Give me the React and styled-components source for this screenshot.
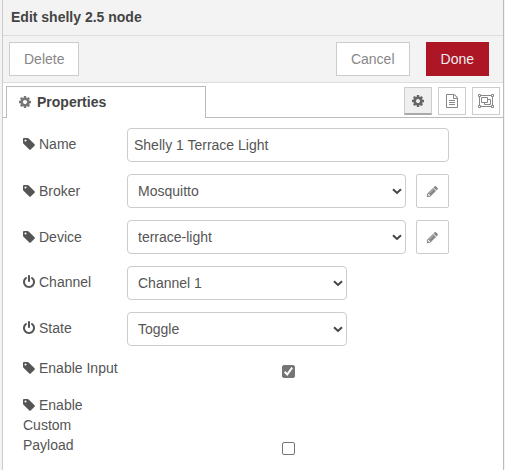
import React from "react";
import styled, { createGlobalStyle, css } from "styled-components";

const GlobalStyle = createGlobalStyle`
  *, *::before, *::after { box-sizing: border-box; }
  body {
    margin: 0;
    background: #f3f3f3;
    color: #555;
    font: 14px/20px "Helvetica Neue", "Liberation Sans", Arial, sans-serif;
  }
  button, input, select { font: inherit; margin: 0; }
`;

const Tray = styled.main`
  min-height: 100vh;
  margin: 0 1px 0 2px;
  border: 1px solid #bbb;
  border-left-color: #ccc;
  border-width: 0 1px;
  background: #fff;
`;

const Header = styled.h1`
  margin: 0;
  padding: 7px 8px 8px;
  border-bottom: 1px solid #ddd;
  background: #f3f3f3;
  color: #444;
  font-size: 14px;
  font-weight: bold;
  line-height: 20px;
`;

const Toolbar = styled.div`
  display: flex;
  align-items: center;
  gap: 16px;
  padding: 6px 14px 6px 6px;
  border-bottom: 1px solid #ddd;
  background: #f3f3f3;
`;

const Button = styled.button`
  height: 34px;
  padding: 0 14px;
  border: 1px solid #ccc;
  border-radius: 0;
  background: #fff;
  color: #888;
  cursor: pointer;
  ${(p) => p.$pushRight && css`margin-left: auto;`}
  ${(p) =>
    p.$primary &&
    css`
      border-color: #ad1625;
      background: #ad1625;
      color: #eee;
    `}
`;

const TabBar = styled.div`
  display: flex;
  align-items: flex-end;
  padding-top: 3px;
  &::before {
    content: "";
    width: 3px;
    border-bottom: 1px solid #bbb;
  }
`;

const Tab = styled.h2`
  display: flex;
  align-items: center;
  gap: 5px;
  flex: 0 0 200px;
  height: 32px;
  margin: 0;
  padding: 0 12px 2px;
  border: 1px solid #bbb;
  border-bottom: 0;
  color: #444;
  font-size: 14px;
  font-weight: bold;
  svg { color: #777; }
`;

const TabActions = styled.div`
  display: flex;
  flex: 1;
  justify-content: flex-end;
  gap: 6px;
  height: 32px;
  padding: 1px 3px 0 0;
  border-bottom: 1px solid #bbb;
`;

const TabButton = styled.button`
  display: grid;
  place-items: center;
  width: 28px;
  height: 28px;
  padding: 0;
  border: 1px solid #ccc;
  background: #fff;
  color: #888;
  cursor: pointer;
  ${(p) =>
    p.$selected &&
    css`
      border-bottom: 2px solid #aaa;
      background: #efefef;
      color: #666;
    `}
`;

const Form = styled.form`
  display: flex;
  flex-direction: column;
  gap: 12px;
  padding: 10px 20px;
`;

const Row = styled.div`
  display: grid;
  grid-template-columns: 104px minmax(0, 7fr) minmax(0, 34px);
  align-items: ${(p) => (p.$check ? "end" : "center")};
`;

const Label = styled.label`
  padding-bottom: ${(p) => (p.$check ? "5px" : p.$level ? "0" : "2px")};
  padding-right: ${(p) => (p.$narrow ? "24px" : "0")};
  svg { margin-right: 3px; vertical-align: -2px; }
`;

const Controls = styled.div`
  display: flex;
  gap: 10px;
`;

const field = css`
  width: 100%;
  height: 34px;
  border: 1px solid #ccc;
  border-radius: 4px;
  background: #fff;
  color: #555;
`;

const TextInput = styled.input`
  ${field}
  padding: 0 6px;
`;

const SelectBox = styled.div`
  position: relative;
  flex: ${(p) => (p.$short ? "0 1 220px" : "1")};
  svg {
    position: absolute;
    top: 14px;
    right: 4px;
    color: #444;
    pointer-events: none;
  }
`;

const Select = styled.select`
  ${field}
  appearance: none;
  padding: 0 20px 0 10px;
`;

const EditButton = styled.button`
  display: grid;
  place-items: center;
  flex: 0 0 33px;
  height: 34px;
  padding: 0;
  border: 1px solid #ccc;
  border-radius: 2px;
  background: #fff;
  color: #888;
  cursor: pointer;
`;

const CheckCell = styled.div`
  position: relative;
  display: grid;
  place-items: center;
  padding-bottom: 5px;
  svg {
    grid-area: 1 / 1;
    z-index: 1;
    color: #fff;
    pointer-events: none;
  }
`;

const Checkbox = styled.input`
  appearance: none;
  grid-area: 1 / 1;
  width: 13px;
  height: 13px;
  border: 1px solid #767676;
  border-radius: 2px;
  background: #fff;
  &:checked { background: #757575; }
  &:not(:checked) + svg { visibility: hidden; }
`;

const PATHS = {
  cog: "M1152 896q0-106-75-181t-181-75-181 75-75 181 75 181 181 75 181-75 75-181zm512-109v222q0 12-8 23t-20 13l-185 28q-19 54-39 91 35 50 107 138 10 12 10 25t-9 23q-27 37-99 108t-94 71q-12 0-26-9l-138-108q-44 23-91 38-16 136-29 186-7 28-36 28h-222q-14 0-24.5-8.5t-11.5-21.5l-28-184q-49-16-90-37l-141 107q-10 9-25 9-14 0-25-11-126-114-165-168-7-10-7-23 0-12 8-23 15-21 51-66.5t54-70.5q-27-50-41-99l-183-27q-13-2-21-12.5t-8-23.5v-222q0-12 8-23t19-13l186-28q14-46 39-92-40-57-107-138-10-12-10-24 0-10 9-23 26-36 98.5-107.5t94.5-71.5q13 0 26 10l138 107q44-23 91-38 16-136 29-186 7-28 36-28h222q14 0 24.5 8.5t11.5 21.5l28 184q49 16 90 37l142-107q9-9 24-9 13 0 25 10 129 119 165 170 7 8 7 22 0 12-8 23-15 21-51 66.5t-54 70.5q26 50 41 98l183 28q13 2 21 12.5t8 23.5z",
  tag: "M576 448q0-53-37.5-90.5t-90.5-37.5-90.5 37.5-37.5 90.5 37.5 90.5 90.5 37.5 90.5-37.5 37.5-90.5zm1067 576q0 53-37 90l-491 492q-39 37-91 37-53 0-90-37l-715-716q-38-37-64.5-101t-26.5-117v-416q0-52 38-90t90-38h416q53 0 117 26.5t102 64.5l715 714q37 39 37 91z",
  power: "M1664 896q0 156-61 298t-164 245-245 164-298 61-298-61-245-164-164-245-61-298q0-182 80.5-343t226.5-270q43-32 95.5-25t83.5 50q32 42 24.5 94.5t-49.5 84.5q-98 74-151.5 181t-53.5 228q0 104 40.5 198.5t109.5 163.5 163.5 109.5 198.5 40.5 198.5-40.5 163.5-109.5 109.5-163.5 40.5-198.5q0-121-53.5-228t-151.5-181q-42-32-49.5-84.5t24.5-94.5q31-43 84-50t95 25q146 109 226.5 270t80.5 343zm-640-768v640q0 52-38 90t-90 38-90-38-38-90v-640q0-52 38-90t90-38 90 38 38 90z",
  pencil: "M491 1536l91-91-235-235-91 91v107h128v128h107zm523-928q0-22-22-22-10 0-17 7l-542 542q-7 7-7 17 0 22 22 22 10 0 17-7l542-542q7-7 7-17zm-54-192l416 416-832 832h-416v-416zm683 96q0 53-37 90l-166 166-416-416 166-165q36-38 90-38 53 0 91 38l235 234q37 39 37 91z",
  file: "M1596 380q28 28 48 76t20 88v1152q0 40-28 68t-68 28h-1344q-40 0-68-28t-28-68v-1600q0-40 28-68t68-28h896q40 0 88 20t76 48zm-444-244v376h376q-10-29-22-41l-313-313q-12-12-41-22zm384 1528v-1024h-416q-40 0-68-28t-28-68v-416h-768v1536h1280zm-1024-864q0-14 9-23t23-9h704q14 0 23 9t9 23v64q0 14-9 23t-23 9h-704q-14 0-23-9t-9-23v-64zm736 224q14 0 23 9t9 23v64q0 14-9 23t-23 9h-704q-14 0-23-9t-9-23v-64q0-14 9-23t23-9h704zm0 256q14 0 23 9t9 23v64q0 14-9 23t-23 9h-704q-14 0-23-9t-9-23v-64q0-14 9-23t23-9h704z",
};

const Icon = ({ name, size = 14 }) => (
  <svg width={size} height={size} viewBox="0 0 1792 1792" fill="currentColor" aria-hidden="true">
    <path d={PATHS[name]} />
  </svg>
);

/* Same drawing without the blank column at its left, so it lines up with text. */
const InlineIcon = ({ name }) => (
  <svg width="13" height="14" viewBox="128 0 1664 1792" fill="currentColor" aria-hidden="true">
    <path d={PATHS[name]} />
  </svg>
);

const ObjectGroupIcon = () => (
  <svg width="16" height="14" viewBox="0 0 16 14" fill="none" stroke="currentColor" aria-hidden="true">
    <path d="M3 1.5h10M3 12.5h10M1.5 3v8M14.5 3v8" />
    <path d="M.5.5h2v2h-2zM13.5.5h2v2h-2zM.5 11.5h2v2h-2zM13.5 11.5h2v2h-2z" />
    <path d="M3.5 3.5h6v5h-6z" />
    <path d="M9.5 5.5h3v5h-6v-2" />
  </svg>
);

const Chevron = () => (
  <svg width="10" height="7" viewBox="0 0 10 7" fill="none" stroke="currentColor" strokeWidth="2" aria-hidden="true">
    <path d="M1 1.3l4 3.700 4-3.700" />
  </svg>
);

const Check = () => (
  <svg width="13" height="13" viewBox="0 0 13 13" fill="none" stroke="currentColor" strokeWidth="2" aria-hidden="true">
    <path d="M2.7 6.800l2.500 2.700 5-6.800" />
  </svg>
);

const SelectRow = ({ id, label, icon, value, short, editable }) => (
  <Row>
    <Label htmlFor={id} $level={editable}>
      <InlineIcon name={icon} />
      {label}
    </Label>
    <Controls>
      <SelectBox $short={short}>
        <Select id={id} defaultValue={value}>
          <option>{value}</option>
        </Select>
        <Chevron />
      </SelectBox>
      {editable && (
        <EditButton type="button" aria-label={`Edit ${label}`}>
          <Icon name="pencil" size={13} />
        </EditButton>
      )}
    </Controls>
  </Row>
);

const CheckRow = ({ id, label, checked, narrow }) => (
  <Row $check>
    <Label htmlFor={id} $check $narrow={narrow}>
      <InlineIcon name="tag" />
      {label}
    </Label>
    <CheckCell>
      <Checkbox type="checkbox" id={id} defaultChecked={checked} />
      <Check />
    </CheckCell>
  </Row>
);

export default function App() {
  return (
    <>
      <GlobalStyle />
      <Tray>
        <Header>Edit shelly 2.5 node</Header>
        <Toolbar>
          <Button type="button">Delete</Button>
          <Button type="button" $pushRight>Cancel</Button>
          <Button type="button" $primary>Done</Button>
        </Toolbar>
        <TabBar>
          <Tab>
            <InlineIcon name="cog" />
            Properties
          </Tab>
          <TabActions>
            <TabButton type="button" aria-label="Properties" $selected>
              <Icon name="cog" />
            </TabButton>
            <TabButton type="button" aria-label="Description">
              <Icon name="file" />
            </TabButton>
            <TabButton type="button" aria-label="Appearance">
              <ObjectGroupIcon />
            </TabButton>
          </TabActions>
        </TabBar>
        <Form>
          <Row>
            <Label htmlFor="name">
              <InlineIcon name="tag" />
              Name
            </Label>
            <TextInput id="name" type="text" defaultValue="Shelly 1 Terrace Light" />
          </Row>
          <SelectRow id="broker" label="Broker" icon="tag" value="Mosquitto" editable />
          <SelectRow id="device" label="Device" icon="tag" value="terrace-light" editable />
          <SelectRow id="channel" label="Channel" icon="power" value="Channel 1" short />
          <SelectRow id="state" label="State" icon="power" value="Toggle" short />
          <CheckRow id="enable-input" label="Enable Input" checked />
          <CheckRow id="enable-payload" label="Enable Custom Payload" narrow />
        </Form>
      </Tray>
    </>
  );
}
